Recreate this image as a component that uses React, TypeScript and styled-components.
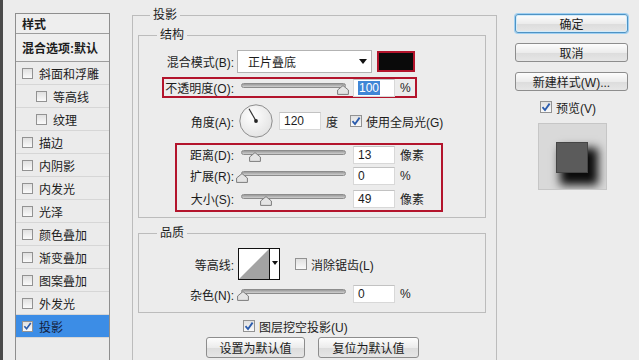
import React from "react";
import styled, { createGlobalStyle } from "styled-components";

const GlobalStyle = createGlobalStyle`
  html, body {
    margin: 0;
    padding: 0;
    background: #ececec;
  }
  body {
    font-family: "Liberation Sans", "Noto Sans CJK SC", sans-serif;
    font-size: 12px;
    color: #1c1c1c;
  }
  * {
    box-sizing: border-box;
  }
`;

interface StyleItem {
  label: string;
  indent?: boolean;
  checked?: boolean;
  selected?: boolean;
}

const styleItems: StyleItem[] = [
  { label: "斜面和浮雕" },
  { label: "等高线", indent: true },
  { label: "纹理", indent: true },
  { label: "描边" },
  { label: "内阴影" },
  { label: "内发光" },
  { label: "光泽" },
  { label: "颜色叠加" },
  { label: "渐变叠加" },
  { label: "图案叠加" },
  { label: "外发光" },
  { label: "投影", checked: true, selected: true }
];

const CheckMark = () => (
  <svg width="10" height="10" viewBox="0 0 10 10">
    <path
      d="M1.5 5.2 L4 8 L8.6 1.6"
      fill="none"
      stroke="#2b5cad"
      strokeWidth="1.8"
    />
  </svg>
);

const Check = ({ checked, size = 12 }: { checked?: boolean; size?: number }) => (
  <CheckBox $size={size}>{checked && <CheckMark />}</CheckBox>
);

const Slider = ({ thumb }: { thumb: number }) => (
  <SliderWrap>
    <Track />
    <Thumb viewBox="0 0 12 10" style={{ left: thumb }}>
      <path
        d="M6 0.6 L11.4 5 L11.4 9.4 L0.6 9.4 L0.6 5 Z"
        fill="#e4e4e4"
        stroke="#7c7c7c"
        strokeWidth="1"
      />
    </Thumb>
  </SliderWrap>
);

const AngleDial = () => (
  <Dial width="34" height="34" viewBox="0 0 34 34">
    <defs>
      <radialGradient id="dialFill" cx="40%" cy="35%" r="70%">
        <stop offset="0%" stopColor="#ffffff" />
        <stop offset="100%" stopColor="#e2e2e2" />
      </radialGradient>
    </defs>
    <circle cx="17" cy="17" r="16.2" fill="url(#dialFill)" stroke="#8d8d8d" />
    <line x1="17" y1="17" x2="10" y2="4.8" stroke="#333" strokeWidth="1.2" />
    <circle cx="17" cy="17" r="1.9" fill="#222" />
  </Dial>
);

const ContourPicker = () => (
  <Contour width="42" height="32" viewBox="0 0 42 32">
    <rect x="0.5" y="0.5" width="41" height="31" fill="#fff" stroke="#111" />
    <polygon points="1,31 31,1 31,31" fill="#a3a3a3" />
    <line x1="31.5" y1="0.5" x2="31.5" y2="31.5" stroke="#111" />
    <polygon points="34,13 40,13 37,17" fill="#111" />
  </Contour>
);

const App = () => {
  return (
    <>
      <GlobalStyle />
      <Page>
        <StyleList>
          <ListHeader $h={20}>样式</ListHeader>
          <ListHeader $h={28}>混合选项:默认</ListHeader>
          {styleItems.map((item) => (
            <ListItem
              key={item.label}
              $indent={item.indent}
              $selected={item.selected}
            >
              <Check checked={item.checked} size={11} />
              <span>{item.label}</span>
            </ListItem>
          ))}
        </StyleList>

        <MainGroup>
          <Legend $indent={12}>投影</Legend>

          <InnerGroup $top={4} $bottom={5}>
            <Legend $indent={18}>结构</Legend>
            <FieldRow $h={23} $top={7}>
              <Label $w={98}>混合模式(B):</Label>
              <Select>
                <span>正片叠底</span>
                <SelectArrow />
              </Select>
              <Swatch />
            </FieldRow>

            <Highlight $left={23} $top={4} $w={255}>
              <FieldRow $h={17}>
                <Label $w={73}>不透明度(O):</Label>
                <Slider thumb={102} />
                <NumberBox>
                  <Selected>100</Selected>
                </NumberBox>
                <Unit>%</Unit>
              </FieldRow>
            </Highlight>

            <FieldRow $h={34} $top={6}>
              <Label $w={98}>角度(A):</Label>
              <AngleDial />
              <NumberBox $left={6}>120</NumberBox>
              <Unit>度</Unit>
              <CheckLabel $left={12}>
                <Check checked />
                <span>使用全局光(G)</span>
              </CheckLabel>
            </FieldRow>

            <Highlight $left={36} $top={5} $w={268}>
              <FieldRow $h={19}>
                <Label $w={60}>距离(D):</Label>
                <Slider thumb={14} />
                <NumberBox>13</NumberBox>
                <Unit>像素</Unit>
              </FieldRow>
              <FieldRow $h={23}>
                <Label $w={60}>扩展(R):</Label>
                <Slider thumb={1} />
                <NumberBox>0</NumberBox>
                <Unit>%</Unit>
              </FieldRow>
              <FieldRow $h={23}>
                <Label $w={60}>大小(S):</Label>
                <Slider thumb={25} />
                <NumberBox>49</NumberBox>
                <Unit>像素</Unit>
              </FieldRow>
            </Highlight>
          </InnerGroup>

          <InnerGroup $top={7} $bottom={7}>
            <Legend $indent={18}>品质</Legend>
            <FieldRow $h={32} $top={7}>
              <Label $w={98}>等高线:</Label>
              <ContourPicker />
              <CheckLabel $left={15}>
                <Check />
                <span>消除锯齿(L)</span>
              </CheckLabel>
            </FieldRow>
            <FieldRow $h={22} $top={3}>
              <Label $w={98}>杂色(N):</Label>
              <Slider thumb={2} />
              <NumberBox>0</NumberBox>
              <Unit>%</Unit>
            </FieldRow>
          </InnerGroup>

          <KnockoutRow>
            <CheckLabel>
              <Check checked />
              <span>图层挖空投影(U)</span>
            </CheckLabel>
          </KnockoutRow>

          <DefaultsRow>
            <PushButton $w={99}>设置为默认值</PushButton>
            <PushButton $w={101}>复位为默认值</PushButton>
          </DefaultsRow>
        </MainGroup>

        <SideColumn>
          <PushButton $primary>确定</PushButton>
          <PushButton>取消</PushButton>
          <PushButton>新建样式(W)...</PushButton>
          <PreviewToggle>
            <Check checked />
            <span>预览(V)</span>
          </PreviewToggle>
          <PreviewFrame>
            <PreviewSquare />
          </PreviewFrame>
        </SideColumn>
      </Page>
    </>
  );
};

const Page = styled.div`
  display: flex;
  align-items: flex-start;
  width: 639px;
  height: 360px;
  overflow: hidden;
  background: #ececec;
  border-left: 3px solid #4a4a4a;
  padding-left: 12px;
`;

const StyleList = styled.ul`
  list-style: none;
  margin: 13px 0 0;
  padding: 0;
  width: 95px;
  height: 360px;
  flex-shrink: 0;
  border: 1px solid #8e8e8e;
  background: #ebebeb;
`;

const ListHeader = styled.li<{ $h: number }>`
  height: ${({ $h }) => $h}px;
  display: flex;
  align-items: center;
  padding-left: 6px;
  font-weight: bold;
  background: #eeeeee;
  border-bottom: 1px solid #9d9d9d;
  white-space: nowrap;
`;

const ListItem = styled.li<{ $indent?: boolean; $selected?: boolean }>`
  height: 23px;
  display: flex;
  align-items: center;
  gap: 6px;
  padding-left: ${({ $indent }) => ($indent ? 20 : 6)}px;
  background: ${({ $selected }) => ($selected ? "#3c8de6" : "transparent")};
  color: ${({ $selected }) => ($selected ? "#14213d" : "#1c1c1c")};
  border-bottom: 1px solid #d6d6d6;
`;

const CheckBox = styled.span<{ $size: number }>`
  width: ${({ $size }) => $size}px;
  height: ${({ $size }) => $size}px;
  flex-shrink: 0;
  display: inline-flex;
  align-items: center;
  justify-content: center;
  border: 1px solid #929292;
  background: linear-gradient(#e0e0e0, #fafafa);
`;

const MainGroup = styled.fieldset`
  margin: 7px 0 0 22px;
  width: 365px;
  min-width: 0;
  flex-shrink: 0;
  padding: 0 10px 40px 5px;
  border: 1px solid #bcbcbc;
`;

const Legend = styled.legend<{ $indent: number }>`
  margin-left: ${({ $indent }) => $indent}px;
  padding: 0 3px;
  height: 16px;
  line-height: 16px;
`;

const InnerGroup = styled.fieldset<{ $top: number; $bottom: number }>`
  margin: ${({ $top }) => $top}px 0 0;
  min-width: 0;
  padding: 0 0 ${({ $bottom }) => $bottom}px;
  border: 1px solid #bcbcbc;
`;

const FieldRow = styled.div<{ $h: number; $top?: number }>`
  display: flex;
  align-items: center;
  height: ${({ $h }) => $h}px;
  margin-top: ${({ $top }) => $top ?? 0}px;
  white-space: nowrap;
`;

const Label = styled.span<{ $w: number }>`
  width: ${({ $w }) => $w}px;
  flex-shrink: 0;
  text-align: right;
  padding-right: 3px;
`;

const Highlight = styled.div<{ $left: number; $top: number; $w: number }>`
  margin: ${({ $top }) => $top}px 0 0 ${({ $left }) => $left}px;
  width: ${({ $w }) => $w}px;
  border: 2px solid #b3142c;
`;

const Select = styled.div`
  width: 135px;
  height: 23px;
  display: flex;
  align-items: center;
  padding: 0 4px 0 10px;
  background: #fff;
  border: 1px solid #b3b3b3;
  span {
    flex: 1;
  }
`;

const SelectArrow = styled.i`
  width: 0;
  height: 0;
  border-left: 4px solid transparent;
  border-right: 4px solid transparent;
  border-top: 5px solid #111;
`;

const Swatch = styled.div`
  margin-left: 5px;
  width: 38px;
  height: 21px;
  border: 2px solid #b3142c;
  background: #0a0a0a;
`;

const SliderWrap = styled.div`
  position: relative;
  width: 105px;
  height: 14px;
  margin-left: 4px;
  flex-shrink: 0;
`;

const Track = styled.div`
  position: absolute;
  left: 0;
  right: 0;
  top: 2px;
  height: 5px;
  border-radius: 3px;
  border: 1px solid #8c8c8c;
  background: linear-gradient(#9a9a9a, #cfcfcf);
`;

const Thumb = styled.svg`
  position: absolute;
  top: 4px;
  width: 12px;
  height: 10px;
  margin-left: -6px;
`;

const NumberBox = styled.div<{ $left?: number }>`
  margin-left: ${({ $left }) => $left ?? 7}px;
  width: 42px;
  height: 18px;
  flex-shrink: 0;
  display: flex;
  align-items: center;
  padding-left: 4px;
  background: #fff;
  border: 1px solid #d8d8d8;
  border-top-color: #c2c2c2;
`;

const Selected = styled.span`
  background: #3f86d6;
  color: #fff;
  padding: 0 1px;
`;

const Unit = styled.span`
  margin-left: 5px;
`;

const Dial = styled.svg`
  margin-left: 2px;
  flex-shrink: 0;
`;

const Contour = styled.svg`
  margin-left: 1px;
  flex-shrink: 0;
`;

const CheckLabel = styled.label<{ $left?: number }>`
  display: flex;
  align-items: center;
  gap: 4px;
  margin-left: ${({ $left }) => $left ?? 0}px;
`;

const KnockoutRow = styled.div`
  display: flex;
  align-items: center;
  height: 14px;
  margin-top: 6px;
  padding-left: 105px;
  white-space: nowrap;
`;

const DefaultsRow = styled.div`
  display: flex;
  gap: 13px;
  margin-top: 4px;
  padding-left: 68px;
`;

const PushButton = styled.button<{ $w?: number; $primary?: boolean }>`
  width: ${({ $w }) => ($w ? `${$w}px` : "100%")};
  height: ${({ $w }) => ($w ? 21 : 19)}px;
  flex-shrink: 0;
  padding: 0;
  font: inherit;
  color: #1c1c1c;
  white-space: nowrap;
  border: 1px solid ${({ $primary }) => ($primary ? "#4f93c4" : "#8d8d8d")};
  border-radius: 3px;
  background: linear-gradient(#fdfdfd, #ececec 50%, #dcdcdc 51%, #e6e6e6);
  box-shadow: ${({ $primary }) =>
    $primary ? "0 0 0 1px #9fd0f2, inset 0 0 0 1px #d3ecfb" : "none"};
`;

const SideColumn = styled.div`
  margin: 14px 0 0 18px;
  width: 113px;
  flex-shrink: 0;
  display: flex;
  flex-direction: column;
  gap: 10px;
`;

const PreviewToggle = styled.label`
  display: flex;
  align-items: center;
  gap: 4px;
  height: 14px;
  margin: -1px 0 0 25px;
  white-space: nowrap;
`;

const PreviewFrame = styled.div`
  margin: -1px 0 0 23px;
  width: 69px;
  height: 67px;
  padding: 18px 0 0 17px;
  border: 1px solid #c6c6c6;
  background: #d9d9d9;
  overflow: hidden;
`;

const PreviewSquare = styled.div`
  width: 32px;
  height: 31px;
  background: #5b5b5b;
  border: 1px solid #454545;
  box-shadow: 7px 9px 9px 3px rgba(0, 0, 0, 0.95);
`;

export default App;
